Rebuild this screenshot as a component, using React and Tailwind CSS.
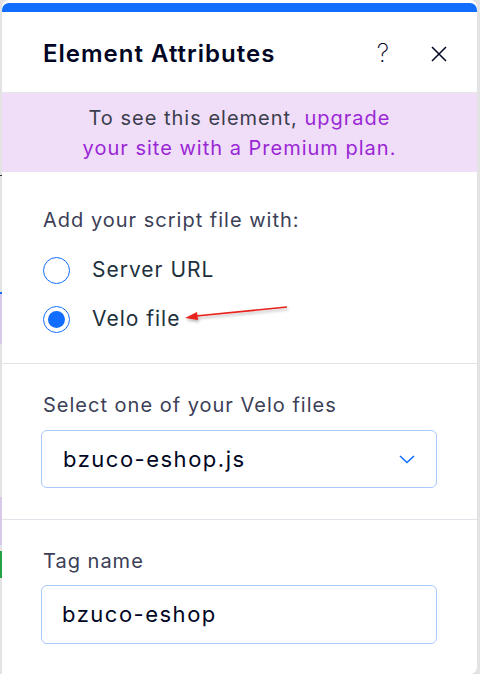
import React from "react";

function Radio({ checked, label }) {
  return (
    <label className="flex items-center gap-[22px] h-[34px]">
      <span className="w-[27px] h-[27px] rounded-full border border-[#116dff] flex items-center justify-center bg-white">
        {checked && <span className="w-[17px] h-[17px] rounded-full bg-[#116dff]" />}
      </span>
      <span className="text-[21px] tracking-[1px] text-[#20303c]">{label}</span>
    </label>
  );
}

export default function App() {
  return (
    <div
      className="w-[480px] h-[674px] bg-[#e3e3e3] flex overflow-hidden"
      style={{ fontFamily: "Inter, 'Noto Sans', sans-serif" }}
    >
      {/* left strip from the canvas behind */}
      <div className="w-[2px] flex flex-col">
        <div className="h-[175px]" />
        <div className="h-[1px] bg-[#333]" />
        <div className="h-[116px]" />
        <div className="h-[2px] bg-[#116dff]" />
        <div className="h-[50px] bg-[#d9c9e8]" />
        <div className="h-[153px]" />
        <div className="h-[48px] bg-[#d9c9e8]" />
        <div className="h-[6px]" />
        <div className="h-[27px] bg-[#25a244]" />
      </div>

      <div className="w-[475px] h-[674px] bg-white rounded-t-[7px] rounded-br-[7px] overflow-hidden flex flex-col">
        <div className="h-[9px] mt-[3px] bg-[#116dff] rounded-t-[7px] shrink-0" />
        <div className="h-[81px] flex items-center pl-[41px] pr-[30px] pt-[3px] border-b border-[#e6e6e6] shrink-0">
          <h2 className="flex-1 text-[24px] font-semibold tracking-[1px] text-[#000624]">Element Attributes</h2>
          <span className="text-[25px] font-extralight text-[#000624] mr-[42px]">?</span>
          <svg width="16" height="16" viewBox="0 0 16 16" className="text-[#000624]">
            <path d="M1 1 L15 15 M15 1 L1 15" stroke="currentColor" strokeWidth="1.5" fill="none" />
          </svg>
        </div>

        <div className="h-[79px] bg-[#f0def9] flex items-center justify-center text-center shrink-0">
          <p className="text-[20px] leading-[30px] tracking-[1px] text-[#3b3d4d] pt-[1px]">
            To see this element, <span className="text-[#9a27d5]">upgrade</span>
            <br />
            <span className="text-[#9a27d5]">your site with a Premium plan.</span>
          </p>
        </div>

        <div className="px-[41px] pt-[34px] pb-[27px] border-b border-[#dfe5eb] shrink-0">
          <p className="text-[20px] leading-[28px] tracking-[1px] text-[#3b4057] mb-[19px]">Add your script file with:</p>
          <div className="flex flex-col gap-[15px]">
            <Radio label="Server URL" />
            <Radio checked label="Velo file" />
          </div>
        </div>

        <div className="px-[39px] pt-[27px] pb-[31px] border-b border-[#dfe5eb] shrink-0">
          <p className="text-[20px] leading-[28px] tracking-[1px] text-[#3b4057] mb-[11px] pl-[2px]">Select one of your Velo files</p>
          <div className="h-[58px] w-[396px] rounded-[6px] border border-[#a8caff] flex items-center pl-[21px] pr-[20px]">
            <span className="flex-1 text-[22px] tracking-[1.5px] text-[#000624]">bzuco-eshop.js</span>
            <svg width="18" height="10" viewBox="0 0 18 10">
              <path d="M2 2 L9 8.5 L16 2" stroke="#116dff" strokeWidth="1.6" fill="none" />
            </svg>
          </div>
        </div>

        <div className="px-[39px] pt-[27px]">
          <p className="text-[20px] leading-[28px] tracking-[1px] text-[#3b4057] mb-[10px] pl-[2px]">Tag name</p>
          <div className="h-[59px] w-[396px] rounded-[6px] border border-[#a8caff] flex items-center pl-[20px]">
            <span className="text-[22px] tracking-[1.5px] text-[#000624]">bzuco-eshop</span>
          </div>
        </div>
      </div>

      {/* red annotation arrow */}
      <svg className="absolute left-0 top-0 pointer-events-none" width="480" height="674">
        <defs>
          <filter id="sh" x="-10%" y="-50%" width="120%" height="200%">
            <feDropShadow dx="1" dy="2" stdDeviation="1.5" floodColor="#000" floodOpacity="0.3" />
          </filter>
        </defs>
        <g filter="url(#sh)">
          <line x1="287" y1="307" x2="196" y2="316" stroke="#e8201a" strokeWidth="1.6" />
          <path d="M185 318 L197 312 L198 320 Z" fill="#e8201a" />
        </g>
      </svg>
    </div>
  );
}
